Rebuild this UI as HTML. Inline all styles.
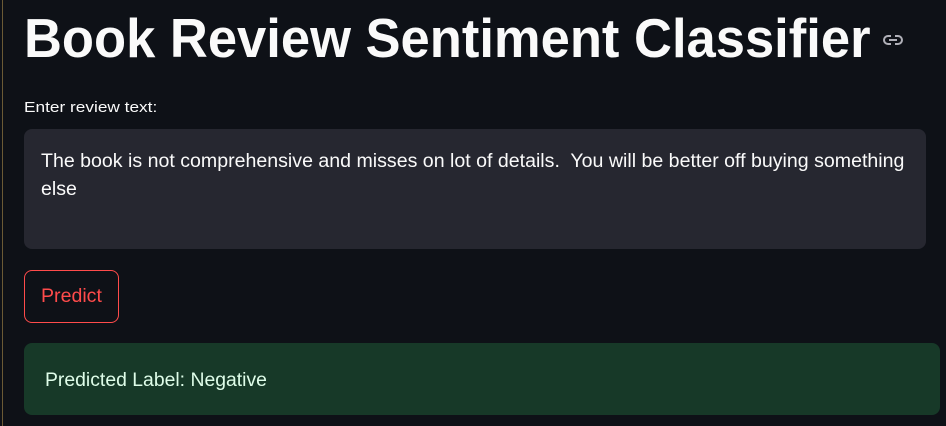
<!DOCTYPE html>
<html><head><style>
html,body{margin:0;padding:0;background:#0e1117;width:946px;height:426px;overflow:hidden;font-family:"Liberation Sans",sans-serif;color:#fafafa;position:relative}
.edge{position:absolute;left:2px;top:0;width:1px;height:426px;background:#6b5a35}
.s{display:inline-block;transform-origin:left center;white-space:nowrap}
.title{position:absolute;left:24px;top:6px;font-size:55px;font-weight:bold;line-height:64px}
.link{position:absolute;left:882px;top:32px}
.label{position:absolute;left:24px;top:99px;font-size:15px}
.ta{position:absolute;left:24px;top:129px;width:902px;height:120px;background:#262730;border-radius:8px}
.ta .t{position:absolute;left:17px;top:19px;font-size:19px;line-height:28px;color:#fafafa}
.btn{position:absolute;left:24px;top:270px;width:93px;height:51px;border:1px solid #ff4b4b;border-radius:8px;box-sizing:content-box}
.btn span{position:absolute;left:16px;top:15px;font-size:19px;color:#ff4b4b}
.ok{position:absolute;left:24px;top:343px;width:916px;height:72px;background:#173928;border-radius:8px}
.ok span{position:absolute;left:21px;top:27px;font-size:19px;color:#dffde9}
</style></head><body>
<div class="edge"></div>
<div class="title"><span class="s" style="transform:scaleX(0.955)">Book Review Sentiment Classifier</span></div>
<svg class="link" width="22" height="16" viewBox="0 0 22 16"><path d="M9 4H6a4 4 0 0 0 0 8h3M13 4h3a4 4 0 0 1 0 8h-3M7 8h8" stroke="#b0b0b8" stroke-width="2" fill="none"/></svg>
<div class="label"><span class="s" style="transform:scaleX(1.15)">Enter review text:</span></div>
<div class="ta"><div class="t"><span class="s" style="transform:scaleX(1.03)">The book is not comprehensive and misses on lot of details.&nbsp; You will be better off buying something</span><br><span class="s" style="transform:scaleX(1.03)">else</span></div></div>
<div class="btn"><span class="s" style="transform:scaleX(1.03)">Predict</span></div>
<div class="ok"><span class="s" style="transform:scaleX(1.02)">Predicted Label: Negative</span></div>
</body></html>
